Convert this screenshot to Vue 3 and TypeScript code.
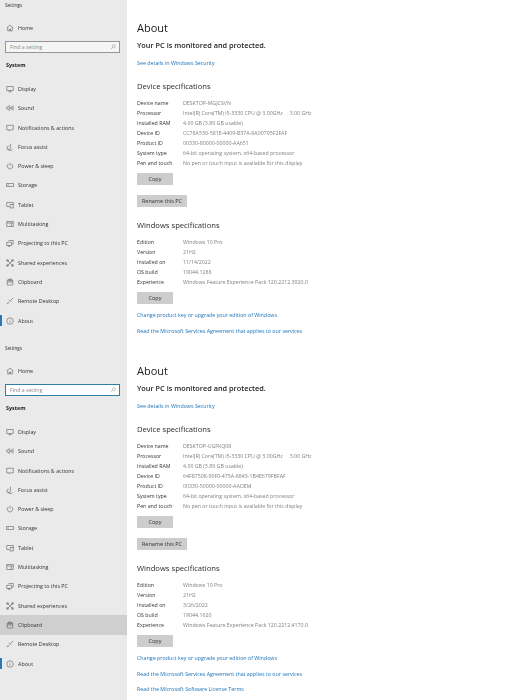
<script setup lang="ts">
interface Spec {
  label: string
  value: string
}

interface SettingsWindow {
  focusedSearch: boolean
  activeNav: string
  device: Spec[]
  windows: Spec[]
  links: string[]
}

const navItems = [
  { name: 'Display', icon: 'M1.5 3h13v8h-13z M8 11v2.5 M5 13.5h6' },
  { name: 'Sound', icon: 'M1.5 6v4h2l3 3V3l-3 3z M9 6v4 M11.5 4.5v7 M14 3v10' },
  { name: 'Notifications & actions', icon: 'M1.5 2.5h13v9h-5l-3 2.5v-2.5h-5z' },
  { name: 'Focus assist', icon: 'M9 1.5v8 M9 9.5a3.5 3.5 0 1 1-3-3.4 M3 11.5a6 6 0 0 0 10 1.5' },
  { name: 'Power & sleep', icon: 'M8 1.5v6 M4.8 3.8a5.5 5.5 0 1 0 6.4 0' },
  { name: 'Storage', icon: 'M1 5h14v6H1z M3 8h3' },
  { name: 'Tablet', icon: 'M1.5 3h13v5 M1.5 3v8h5 M8 7h6.5v7H8z M11 12h.5' },
  { name: 'Multitasking', icon: 'M1.5 3h13v10h-13z M1.5 6h9v7 M10.5 6h4' },
  { name: 'Projecting to this PC', icon: 'M5 3h9.5v7H12 M1.5 6.5H11V13H1.5z M4 13v1.5h4V13' },
  { name: 'Shared experiences', icon: 'M3 3l10 10 M13 3L3 13 M1.5 1.5h3v3h-3z M11.5 1.5h3v3h-3z M1.5 11.5h3v3h-3z M11.5 11.5h3v3h-3z' },
  { name: 'Clipboard', icon: 'M2.5 4h11v10h-11z M5.5 6V2h5v4z M2.5 8h11' },
  { name: 'Remote Desktop', icon: 'M1.5 14.5L6 9.5 M9 7l5.5-5.5 M6 5.5l4.5 4.5 M4 11.5l1.5 1.5' },
  { name: 'About', icon: 'M8 1.5a6.5 6.5 0 1 0 0 13a6.5 6.5 0 1 0 0-13z M8 7v4.5 M8 4.5v1' }
]

const windowsList: SettingsWindow[] = [
  {
    focusedSearch: false,
    activeNav: '',
    device: [
      { label: 'Device name', value: 'DESKTOP-MGJCSVN' },
      { label: 'Processor', value: 'Intel(R) Core(TM) i5-3330 CPU @ 3.00GHz     3.00 GHz' },
      { label: 'Installed RAM', value: '4.00 GB (3.89 GB usable)' },
      { label: 'Device ID', value: 'CC78A530-581E-4409-B37A-8A00795F2FAF' },
      { label: 'Product ID', value: '00330-80000-00000-AA651' },
      { label: 'System type', value: '64-bit operating system, x64-based processor' },
      { label: 'Pen and touch', value: 'No pen or touch input is available for this display' }
    ],
    windows: [
      { label: 'Edition', value: 'Windows 10 Pro' },
      { label: 'Version', value: '21H2' },
      { label: 'Installed on', value: '11/14/2022' },
      { label: 'OS build', value: '19044.1288' },
      { label: 'Experience', value: 'Windows Feature Experience Pack 120.2212.3920.0' }
    ],
    links: [
      'Change product key or upgrade your edition of Windows',
      'Read the Microsoft Services Agreement that applies to our services'
    ]
  },
  {
    focusedSearch: true,
    activeNav: 'Clipboard',
    device: [
      { label: 'Device name', value: 'DESKTOP-UGFKQ08' },
      { label: 'Processor', value: 'Intel(R) Core(TM) i5-3330 CPU @ 3.00GHz     3.00 GHz' },
      { label: 'Installed RAM', value: '4.00 GB (3.89 GB usable)' },
      { label: 'Device ID', value: '64F87508-90F0-475A-8843-1B4E679FBFAF' },
      { label: 'Product ID', value: '00330-50000-00000-AAOEM' },
      { label: 'System type', value: '64-bit operating system, x64-based processor' },
      { label: 'Pen and touch', value: 'No pen or touch input is available for this display' }
    ],
    windows: [
      { label: 'Edition', value: 'Windows 10 Pro' },
      { label: 'Version', value: '21H2' },
      { label: 'Installed on', value: '3/26/2022' },
      { label: 'OS build', value: '19044.1620' },
      { label: 'Experience', value: 'Windows Feature Experience Pack 120.2212.4170.0' }
    ],
    links: [
      'Change product key or upgrade your edition of Windows',
      'Read the Microsoft Services Agreement that applies to our services',
      'Read the Microsoft Software License Terms'
    ]
  }
]
</script>

<template>
  <div class="page">
    <section v-for="(win, w) in windowsList" :key="w" class="window">
      <aside class="sidebar">
        <div class="app-title">Settings</div>
        <div class="nav-row home">
          <svg class="icon" viewBox="0 0 16 16"><path d="M1.5 8L8 2l6.5 6 M3.5 6.5V14h3.5v-4h2v4h3.5V6.5" /></svg>
          <span>Home</span>
        </div>
        <div class="search" :class="{ focused: win.focusedSearch }">
          <span>Find a setting</span>
          <svg viewBox="0 0 16 16"><path d="M10 2a4 4 0 1 1 0 8a4 4 0 1 1 0-8z M7 9l-5 5" /></svg>
        </div>
        <div class="group-title">System</div>
        <nav class="nav">
          <div
            v-for="item in navItems"
            :key="item.name"
            class="nav-row"
            :class="{ active: item.name === win.activeNav, current: item.name === 'About' }"
          >
            <svg class="icon" viewBox="0 0 16 16"><path :d="item.icon" /></svg>
            <span>{{ item.name }}</span>
          </div>
        </nav>
      </aside>

      <main class="content">
        <h1>About</h1>
        <h2 class="protected">Your PC is monitored and protected.</h2>
        <a class="link first-link">See details in Windows Security</a>

        <h2 class="section-title">Device specifications</h2>
        <div class="specs">
          <div v-for="row in win.device" :key="row.label" class="spec-row">
            <span class="spec-label">{{ row.label }}</span>
            <span class="spec-value">{{ row.value }}</span>
          </div>
        </div>
        <button class="btn copy">Copy</button>
        <button class="btn rename">Rename this PC</button>

        <h2 class="section-title">Windows specifications</h2>
        <div class="specs">
          <div v-for="row in win.windows" :key="row.label" class="spec-row">
            <span class="spec-label">{{ row.label }}</span>
            <span class="spec-value">{{ row.value }}</span>
          </div>
        </div>
        <button class="btn copy">Copy</button>
        <div class="links">
          <a v-for="text in win.links" :key="text" class="link">{{ text }}</a>
        </div>
      </main>
    </section>
  </div>
</template>

<style>
html,
body {
  margin: 0;
  background: #fff;
}
</style>

<style scoped>
.page {
  width: 523px;
  height: 700px;
  overflow: hidden;
  display: flex;
  flex-direction: column;
  font-family: "Open Sans", "Noto Sans", sans-serif;
  color: #2b2b2b;
  filter: blur(0.4px);
}

.window {
  flex: 0 0 343px;
  display: flex;
}

.window:last-child {
  flex: 1;
}

.sidebar {
  width: 127px;
  flex-shrink: 0;
  background: #eaeaea;
  display: flex;
  flex-direction: column;
}

.app-title {
  font-size: 4.6px;
  line-height: 10px;
  padding-left: 5px;
}

.nav-row {
  position: relative;
  height: 19.3px;
  display: flex;
  align-items: center;
  font-size: 5.35px;
  color: #333;
  padding-left: 6px;
  gap: 4px;
}

.home {
  margin-top: 8.5px;
}

.icon {
  width: 8px;
  height: 8px;
  flex-shrink: 0;
  fill: none;
  stroke: #444;
  stroke-width: 1;
}

.search {
  margin: 3px 7px 0 5px;
  height: 12px;
  box-sizing: border-box;
  border: 1px solid #969696;
  background: #f5f5f5;
  display: flex;
  align-items: center;
  justify-content: space-between;
  padding: 0 3px 0 4px;
  font-size: 5.2px;
  color: #8a8a8a;
}

.search svg {
  width: 6px;
  height: 6px;
  fill: none;
  stroke: #777;
  stroke-width: 1.1;
}

.search.focused {
  background: #fff;
  border-color: #2d7fa8;
}

.group-title {
  margin-top: 7px;
  padding-left: 6px;
  font-size: 5.4px;
  line-height: 10px;
  font-weight: 700;
  color: #222;
}

.nav {
  margin-top: 9.5px;
}

.nav-row.active {
  background: #cfcfcf;
}

.nav-row.current::before {
  content: "";
  position: absolute;
  left: 0;
  top: 4px;
  bottom: 4px;
  width: 1.5px;
  background: #2a78b8;
}

.content {
  flex: 1;
  padding: 18px 0 0 10px;
  display: flex;
  flex-direction: column;
  align-items: flex-start;
  background: #fff;
}

h1 {
  margin: 0;
  font-size: 11px;
  line-height: 20px;
  font-weight: 400;
  color: #222;
}

h2 {
  margin: 0;
  font-weight: 400;
}

.protected {
  font-size: 7.35px;
  line-height: 15px;
  font-weight: 600;
  color: #222;
}

.link {
  font-size: 5.32px;
  line-height: 10px;
  color: #1a72b8;
}

.first-link {
  margin-top: 5px;
}

.section-title {
  margin-top: 11.5px;
  font-size: 7.65px;
  line-height: 13px;
  color: #2b2b2b;
}

.specs {
  margin-top: 5px;
}

.spec-row {
  display: flex;
  height: 10px;
  align-items: center;
  font-size: 5.25px;
  white-space: pre;
}

.spec-label {
  width: 46px;
  color: #333;
}

.spec-value {
  color: #808080;
}

.btn {
  border: 0;
  padding: 0;
  height: 12px;
  background: #cdcdcd;
  font-family: inherit;
  font-size: 5.5px;
  color: #333;
}

.copy {
  width: 36px;
  margin-top: 5.5px;
}

.rename {
  width: 50px;
  margin-top: 10px;
}

.links {
  display: flex;
  flex-direction: column;
  gap: 5.5px;
  margin-top: 6px;
}
</style>
